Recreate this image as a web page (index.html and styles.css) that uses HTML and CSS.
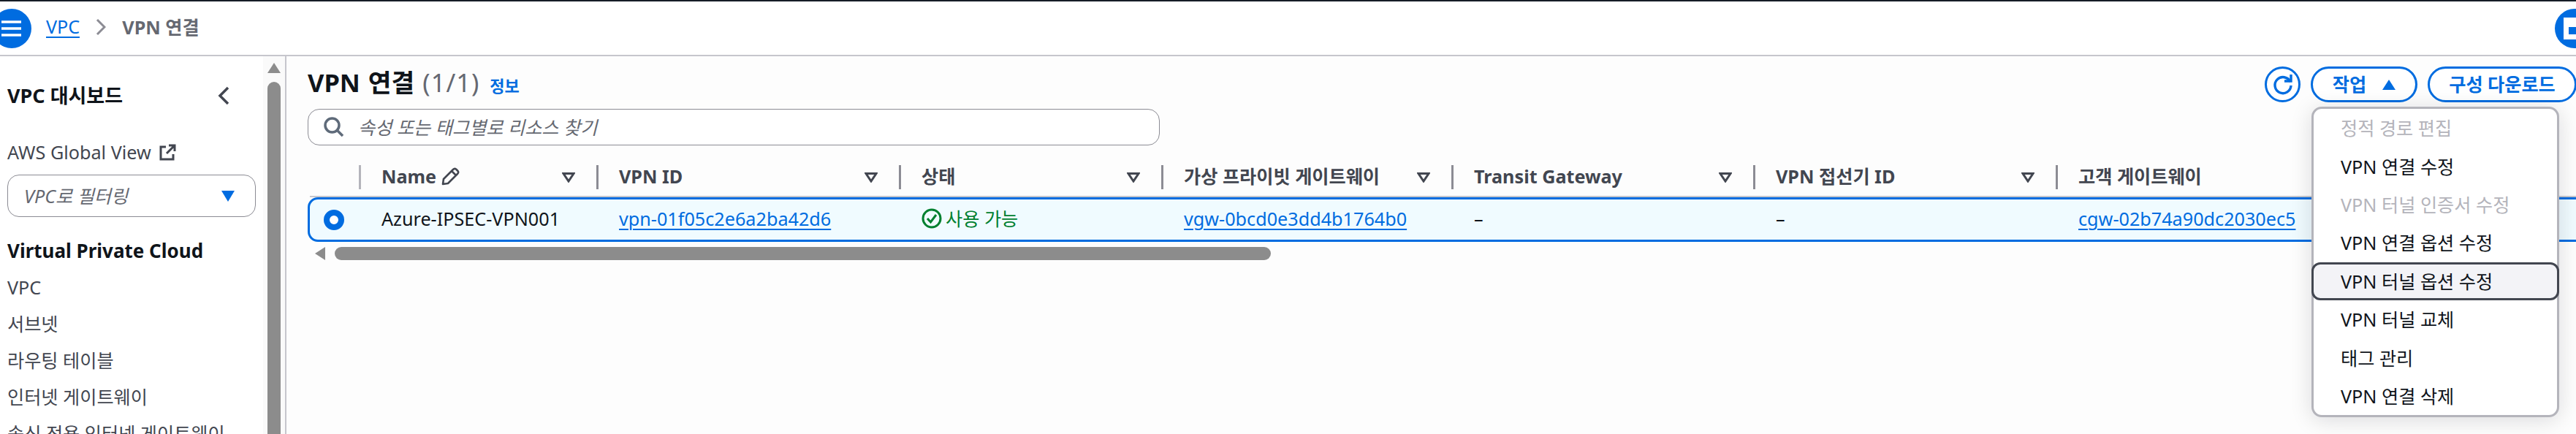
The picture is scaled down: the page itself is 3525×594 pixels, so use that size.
FILE: index.html
```html
<!DOCTYPE html>
<html lang="ko">
<head>
<meta charset="utf-8">
<title>VPN 연결</title>
<link rel="stylesheet" href="styles.css">
</head>
<body>
<div class="page">
  <header class="topbar">
    <div class="round-btn round-left">
      <svg width="30" height="24" viewBox="0 0 30 24"><path d="M0 3h27M0 12h27M0 21h27" stroke="#fff" stroke-width="3.5" fill="none"/></svg>
    </div>
    <nav class="crumbs">
      <a class="crumb-link">VPC</a>
      <svg class="crumb-sep" width="14" height="24" viewBox="0 0 14 24"><path d="M2 2l10 10L2 22" stroke="#8c8c94" stroke-width="3" fill="none"/></svg>
      <span class="crumb-current">VPN 연결</span>
    </nav>
    <div class="round-btn round-right">
      <svg width="30" height="30" viewBox="0 0 30 30"><path d="M0 0h30v30H0zM7 13v10h23V13z" fill="#fff" fill-rule="evenodd"/></svg>
    </div>
  </header>
  <div class="body-row">
    <aside class="sidebar">
      <div class="side-content">
        <div class="side-head">
          <h2 class="side-title">VPC 대시보드</h2>
          <svg width="16" height="26" viewBox="0 0 16 26"><path d="M14 2L3 13l11 11" stroke="#424650" stroke-width="3.5" fill="none"/></svg>
        </div>
        <div class="global-view">AWS Global View
          <svg width="23" height="23" viewBox="0 0 23 23"><path d="M9 4H2v17h17v-7M13 2h8v8M21 2L10 13" stroke="#424650" stroke-width="3" fill="none"/></svg>
        </div>
        <div class="side-filter">
          <span>VPC로 필터링</span>
          <svg width="18" height="15" viewBox="0 0 18 15"><path d="M0 0h18L9 15z" fill="#006ce0"/></svg>
        </div>
        <h3 class="side-section">Virtual Private Cloud</h3>
        <ul class="side-nav">
          <li>VPC</li>
          <li>서브넷</li>
          <li>라우팅 테이블</li>
          <li>인터넷 게이트웨이</li>
          <li>송신 전용 인터넷 게이트웨이</li>
        </ul>
      </div>
      <div class="side-scroll">
        <svg class="scroll-up" width="18" height="14" viewBox="0 0 18 14"><path d="M9 0l9 14H0z" fill="#8c8c8c"/></svg>
        <div class="scroll-thumb"></div>
      </div>
    </aside>
    <main class="main">
      <div class="title-row">
        <h1 class="title">VPN 연결 <span class="count">(1/1)</span></h1>
        <a class="info">정보</a>
      </div>
      <div class="search">
        <svg width="28" height="28" viewBox="0 0 28 28"><circle cx="11.500" cy="11.500" r="9.500" stroke="#5f6b7a" stroke-width="3.500" fill="none"/><path d="M18 18l8 8" stroke="#5f6b7a" stroke-width="3.500"/></svg>
        <span>속성 또는 태그별로 리소스 찾기</span>
      </div>
      <div class="table">
        <div class="thead">
          <div class="col col-sel"></div>
          <div class="col col-name"><div class="th"><span class="th-label">Name <svg width="25" height="25" viewBox="0 0 25 25"><path d="M2 23l1-7L16 3q2-2 4-.5l2.500 2.500q1.500 2-.5 4L9 22zM14 5l6 6" stroke="#424650" stroke-width="2.600" fill="none" stroke-linejoin="round"/></svg></span><svg class="sort" width="18" height="14" viewBox="0 0 18 14"><path d="M2 1.500h14L9 12z" stroke="#424650" stroke-width="3" fill="none"/></svg></div></div>
          <div class="col col-id"><div class="th"><span class="th-label">VPN ID</span><svg class="sort" width="18" height="14" viewBox="0 0 18 14"><path d="M2 1.500h14L9 12z" stroke="#424650" stroke-width="3" fill="none"/></svg></div></div>
          <div class="col col-state"><div class="th"><span class="th-label">상태</span><svg class="sort" width="18" height="14" viewBox="0 0 18 14"><path d="M2 1.500h14L9 12z" stroke="#424650" stroke-width="3" fill="none"/></svg></div></div>
          <div class="col col-vgw"><div class="th"><span class="th-label">가상 프라이빗 게이트웨이</span><svg class="sort" width="18" height="14" viewBox="0 0 18 14"><path d="M2 1.500h14L9 12z" stroke="#424650" stroke-width="3" fill="none"/></svg></div></div>
          <div class="col col-tgw"><div class="th"><span class="th-label">Transit Gateway</span><svg class="sort" width="18" height="14" viewBox="0 0 18 14"><path d="M2 1.500h14L9 12z" stroke="#424650" stroke-width="3" fill="none"/></svg></div></div>
          <div class="col col-conn"><div class="th"><span class="th-label">VPN 접선기 ID</span><svg class="sort" width="18" height="14" viewBox="0 0 18 14"><path d="M2 1.500h14L9 12z" stroke="#424650" stroke-width="3" fill="none"/></svg></div></div>
          <div class="col col-cgw"><div class="th"><span class="th-label">고객 게이트웨이</span></div></div>
        </div>
        <div class="trow">
          <div class="col col-sel"><span class="radio"></span></div>
          <div class="col col-name"><div class="td">Azure-IPSEC-VPN001</div></div>
          <div class="col col-id"><div class="td"><a class="link">vpn-01f05c2e6a2ba42d6</a></div></div>
          <div class="col col-state"><div class="td status"><svg width="28" height="28" viewBox="0 0 28 28"><circle cx="14" cy="14" r="12" stroke="#00802f" stroke-width="3" fill="none"/><path d="M8 14l4.500 5L20 9" stroke="#00802f" stroke-width="3" fill="none"/></svg>사용 가능</div></div>
          <div class="col col-vgw"><div class="td"><a class="link">vgw-0bcd0e3dd4b1764b0</a></div></div>
          <div class="col col-tgw"><div class="td">–</div></div>
          <div class="col col-conn"><div class="td">–</div></div>
          <div class="col col-cgw"><div class="td"><a class="link">cgw-02b74a90dc2030ec5</a></div></div>
        </div>
        <div class="hscroll">
          <svg width="14" height="18" viewBox="0 0 14 18"><path d="M0 9l14-9v18z" fill="#8c8c8c"/></svg>
          <div class="hscroll-thumb"></div>
        </div>
      </div>
      <div class="actions">
        <button class="icon-btn"><svg width="30" height="30" viewBox="0 0 30 30"><path d="M25 11A11 11 0 1 0 26 16" stroke="#006ce0" stroke-width="3.400" fill="none"/><path d="M17 10h9V1" stroke="#006ce0" stroke-width="3.400" fill="none"/></svg></button>
        <button class="btn btn-act"><span class="btn-text">작업</span> <svg width="18" height="14" viewBox="0 0 18 14"><path d="M9 0l9 14H0z" fill="#006ce0"/></svg></button>
        <button class="btn btn-dl"><span class="btn-text">구성 다운로드</span></button>
      </div>
      <ul class="menu">
        <li class="disabled">정적 경로 편집</li>
        <li>VPN 연결 수정</li>
        <li class="disabled">VPN 터널 인증서 수정</li>
        <li>VPN 연결 옵션 수정</li>
        <li class="focused">VPN 터널 옵션 수정</li>
        <li>VPN 터널 교체</li>
        <li>태그 관리</li>
        <li>VPN 연결 삭제</li>
      </ul>
    </main>
  </div>
</div>
</body>
</html>
```
FILE: styles.css
```css
* { box-sizing: border-box; }
html, body { margin: 0; padding: 0; height: 100%; overflow: hidden; }
body {
  font-family: "Noto Sans", "Noto Sans CJK KR", sans-serif;
  font-size: 25.200px;
  line-height: 34px;
  color: #0f141a;
  background: #fff;
}
.page { width: 3525px; height: 594px; overflow: hidden; display: flex; flex-direction: column; border-top: 2px solid #161d26; }
.topbar {
  height: 75px; flex: none; display: flex; align-items: center; position: relative;
  border-bottom: 2px solid #c6c6cd; background: #fff;
  padding-left: 63px;
}
.round-btn {
  position: absolute; top: 10px; width: 54px; height: 54px; border-radius: 50%;
  background: #006ce0; display: flex; align-items: center; overflow: hidden;
}
.round-left { left: -11px; padding-left: 13px; }
.round-right { left: 3496px; padding-left: 12px; }
.crumbs { display: flex; align-items: center; gap: 22px; font-size: 25.200px; margin-top: -3px; }
.crumb-link { color: #006ce0; border-bottom: 2px solid #006ce0; line-height: 27px; }
.crumb-current { color: #656871; font-weight: 700; }
.body-row { flex: 1; display: flex; min-height: 0; }
.sidebar { width: 392px; flex: none; display: flex; border-right: 2px solid #c6c6cd; background: #fff; }
.side-content { flex: 1; padding: 0 10px; min-width: 0; }
.side-head { display: flex; justify-content: space-between; align-items: center; height: 34px; margin-top: 37px; padding-right: 36px; }
.side-title { margin: 0; font-size: 27px; font-weight: 700; }
.global-view { display: flex; align-items: center; gap: 11px; margin-top: 43px; color: #424650; height: 34px; }
.side-filter {
  height: 58px; margin-top: 14px; border: 1.500px solid #8c8c94; border-radius: 16px;
  display: flex; align-items: center; justify-content: space-between; padding: 0 28px 0 22px;
  color: #656871; font-style: italic;
}
.side-section { margin: 29px 0 0; font-size: 26px; font-weight: 700; line-height: 34px; }
.side-nav { list-style: none; margin: 8px 0 0; padding: 0; color: #424650; }
.side-nav li { height: 50px; line-height: 50px; white-space: nowrap; }
.side-scroll { width: 30px; flex: none; background: #fafafa; padding: 9px 6px 0; }
.scroll-up { display: block; }
.scroll-thumb { width: 18px; height: 600px; margin-top: 12px; background: #8c8c8c; border-radius: 9px 9px 0 0; }
.main { flex: 1; position: relative; background: #fdfdfd; padding: 0 0 0 29px; min-width: 0; overflow: hidden; }
.title-row { display: flex; align-items: baseline; gap: 14px; margin-top: 15px; height: 42px; }
.title { margin: 0; font-size: 34.500px; font-weight: 700; line-height: 42px; white-space: nowrap; word-spacing: 2px; }
.count { font-weight: 400; color: #656871; letter-spacing: 1px; }
.info { font-size: 22px; font-weight: 700; color: #006ce0; }
.search {
  width: 1166px; height: 50px; margin-top: 15px; background: #fff;
  border: 1.500px solid #8c8c94; border-radius: 16px;
  display: flex; align-items: center; gap: 19px; padding-left: 21px;
  font-style: italic; color: #656871;
}
.table { margin-top: 27px; width: 3200px; }
.thead { display: flex; height: 33px; }
.col { flex: none; }
.col-sel { width: 70px; }
.col-name { width: 325px; }
.col-id { width: 414px; }
.col-state { width: 359px; }
.col-vgw { width: 397px; }
.col-tgw { width: 413px; }
.col-conn { width: 414px; }
.col-cgw { width: 500px; }
.th {
  height: 33px; border-left: 3px solid #8c8c94; padding: 0 29px 0 28px;
  display: flex; align-items: center; justify-content: space-between;
  font-weight: 700; color: #424650; white-space: nowrap;
}
.th-label { display: flex; align-items: center; gap: 7px; margin-top: -3px; }
.col-sel + .col .th { border-left-color: #b4b4bb; }
.trow {
  display: flex; align-items: center; height: 61px; margin-top: 11px;
  border: 3px solid #006ce0; border-radius: 14px; background: #f0fbff;
  margin-left: 0; position: relative;
}
.trow::before { content: ""; position: absolute; left: 0; right: 0; top: -5px; height: 2px; background: #c6c6cd; }
.trow .col-sel { width: 67px; padding-left: 19px; display: flex; align-items: center; }
.radio { width: 28px; height: 28px; border-radius: 50%; border: 8px solid #006ce0; background: #fff; }
.td { padding-left: 31px; white-space: nowrap; display: flex; align-items: center; margin-top: -4px; }
.link { color: #006ce0; text-decoration: underline; text-decoration-thickness: 2px; text-underline-offset: 4px; }
.status { color: #00802f; gap: 5px; }
.hscroll { display: flex; align-items: center; margin-top: 7px; padding-left: 10px; gap: 13px; height: 18px; }
.hscroll-thumb { width: 1281px; height: 18px; border-radius: 9px; background: #8c8c8c; }
.actions { position: absolute; top: 14px; left: 2707px; display: flex; gap: 14px; align-items: center; }
.icon-btn, .btn {
  height: 49px; border: 3px solid #006ce0; border-radius: 25px; background: #fff;
  color: #006ce0; font-family: inherit; font-size: 25.200px; font-weight: 700; padding: 0;
  display: flex; align-items: center; justify-content: center; flex: none;
}
.btn-text { margin-top: -3px; }
.icon-btn { width: 49px; }
.btn-act { width: 146px; gap: 22px; }
.btn-dl { width: 204px; }
.menu {
  position: absolute; top: 69px; left: 2771px; width: 339px; height: 425px; margin: 0; padding: 0;
  list-style: none; background: #fff; border: 3px solid #b4b4bb; border-radius: 14px;
  box-shadow: 0 4px 30px rgba(0, 7, 22, .14); z-index: 5;
}
.menu li { height: 52.400px; padding: 0 0 0 37px; display: flex; align-items: center; white-space: nowrap; position: relative; }
.menu .disabled { color: #b4b4bb; }
.menu .focused { background: #f3f3f7; border: 3px solid #424650; border-radius: 12px; margin: 0 -3px; padding-left: 37px; }
```
